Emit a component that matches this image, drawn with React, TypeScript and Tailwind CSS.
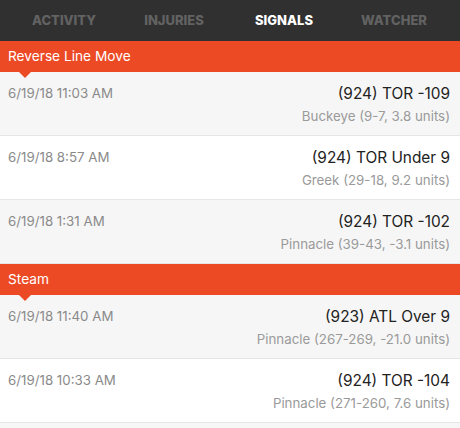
const tabs = ['ACTIVITY', 'INJURIES', 'SIGNALS', 'WATCHER'];

type Signal = { date: string; pick: string; source: string };

const sections: { title: string; rows: Signal[] }[] = [
  {
    title: 'Reverse Line Move',
    rows: [
      { date: '6/19/18 11:03 AM', pick: '(924) TOR -109', source: 'Buckeye (9-7, 3.8 units)' },
      { date: '6/19/18 8:57 AM', pick: '(924) TOR Under 9', source: 'Greek (29-18, 9.2 units)' },
      { date: '6/19/18 1:31 AM', pick: '(924) TOR -102', source: 'Pinnacle (39-43, -3.1 units)' },
    ],
  },
  {
    title: 'Steam',
    rows: [
      { date: '6/19/18 11:40 AM', pick: '(923) ATL Over 9', source: 'Pinnacle (267-269, -21.0 units)' },
      { date: '6/19/18 10:33 AM', pick: '(924) TOR -104', source: 'Pinnacle (271-260, 7.6 units)' },
    ],
  },
];

const App = () => {
  return (
    <div className="w-[460px] h-[428px] overflow-hidden bg-[#f6f6f6] font-['Inter',sans-serif]">
      {/* Tabs */}
      <nav className="flex h-[41px] items-center bg-[#303030] pl-[9px]">
        {tabs.map((t) => (
          <div
            key={t}
            className={`w-[110px] text-center text-[13px] font-extrabold ${
              t === 'SIGNALS' ? 'text-white' : 'text-[#626262]'
            }`}
          >
            {t}
          </div>
        ))}
      </nav>

      {sections.map((s) => (
        <section key={s.title}>
          <div className="relative flex h-[31px] items-center bg-[#ec4a25] px-2 text-[13.7px] text-white">
            {s.title}
            {/* pointer */}
            <span className="absolute left-[19px] top-full z-10 h-0 w-0 border-x-[6px] border-t-[6px] border-x-transparent border-t-[#ec4a25]" />
          </div>
          {s.rows.map((r, i) => (
            <div
              key={r.date}
              className={`flex h-[64px] justify-between border-b border-[#e6e6e6] pl-2 pr-[10px] pt-[11px] ${
                i % 2 === 0 ? 'bg-[#f6f6f6]' : 'bg-white'
              }`}
            >
              <div className="text-[13.3px] leading-[20px] text-[#8a8a8a]">{r.date}</div>
              <div className="flex flex-col items-end">
                <div className="text-[15.4px] leading-[22px] text-[#222]">{r.pick}</div>
                <div className="mt-[1px] text-[13.3px] leading-[20px] text-[#9a9a9a]">{r.source}</div>
              </div>
            </div>
          ))}
        </section>
      ))}
    </div>
  );
};

export default App;
